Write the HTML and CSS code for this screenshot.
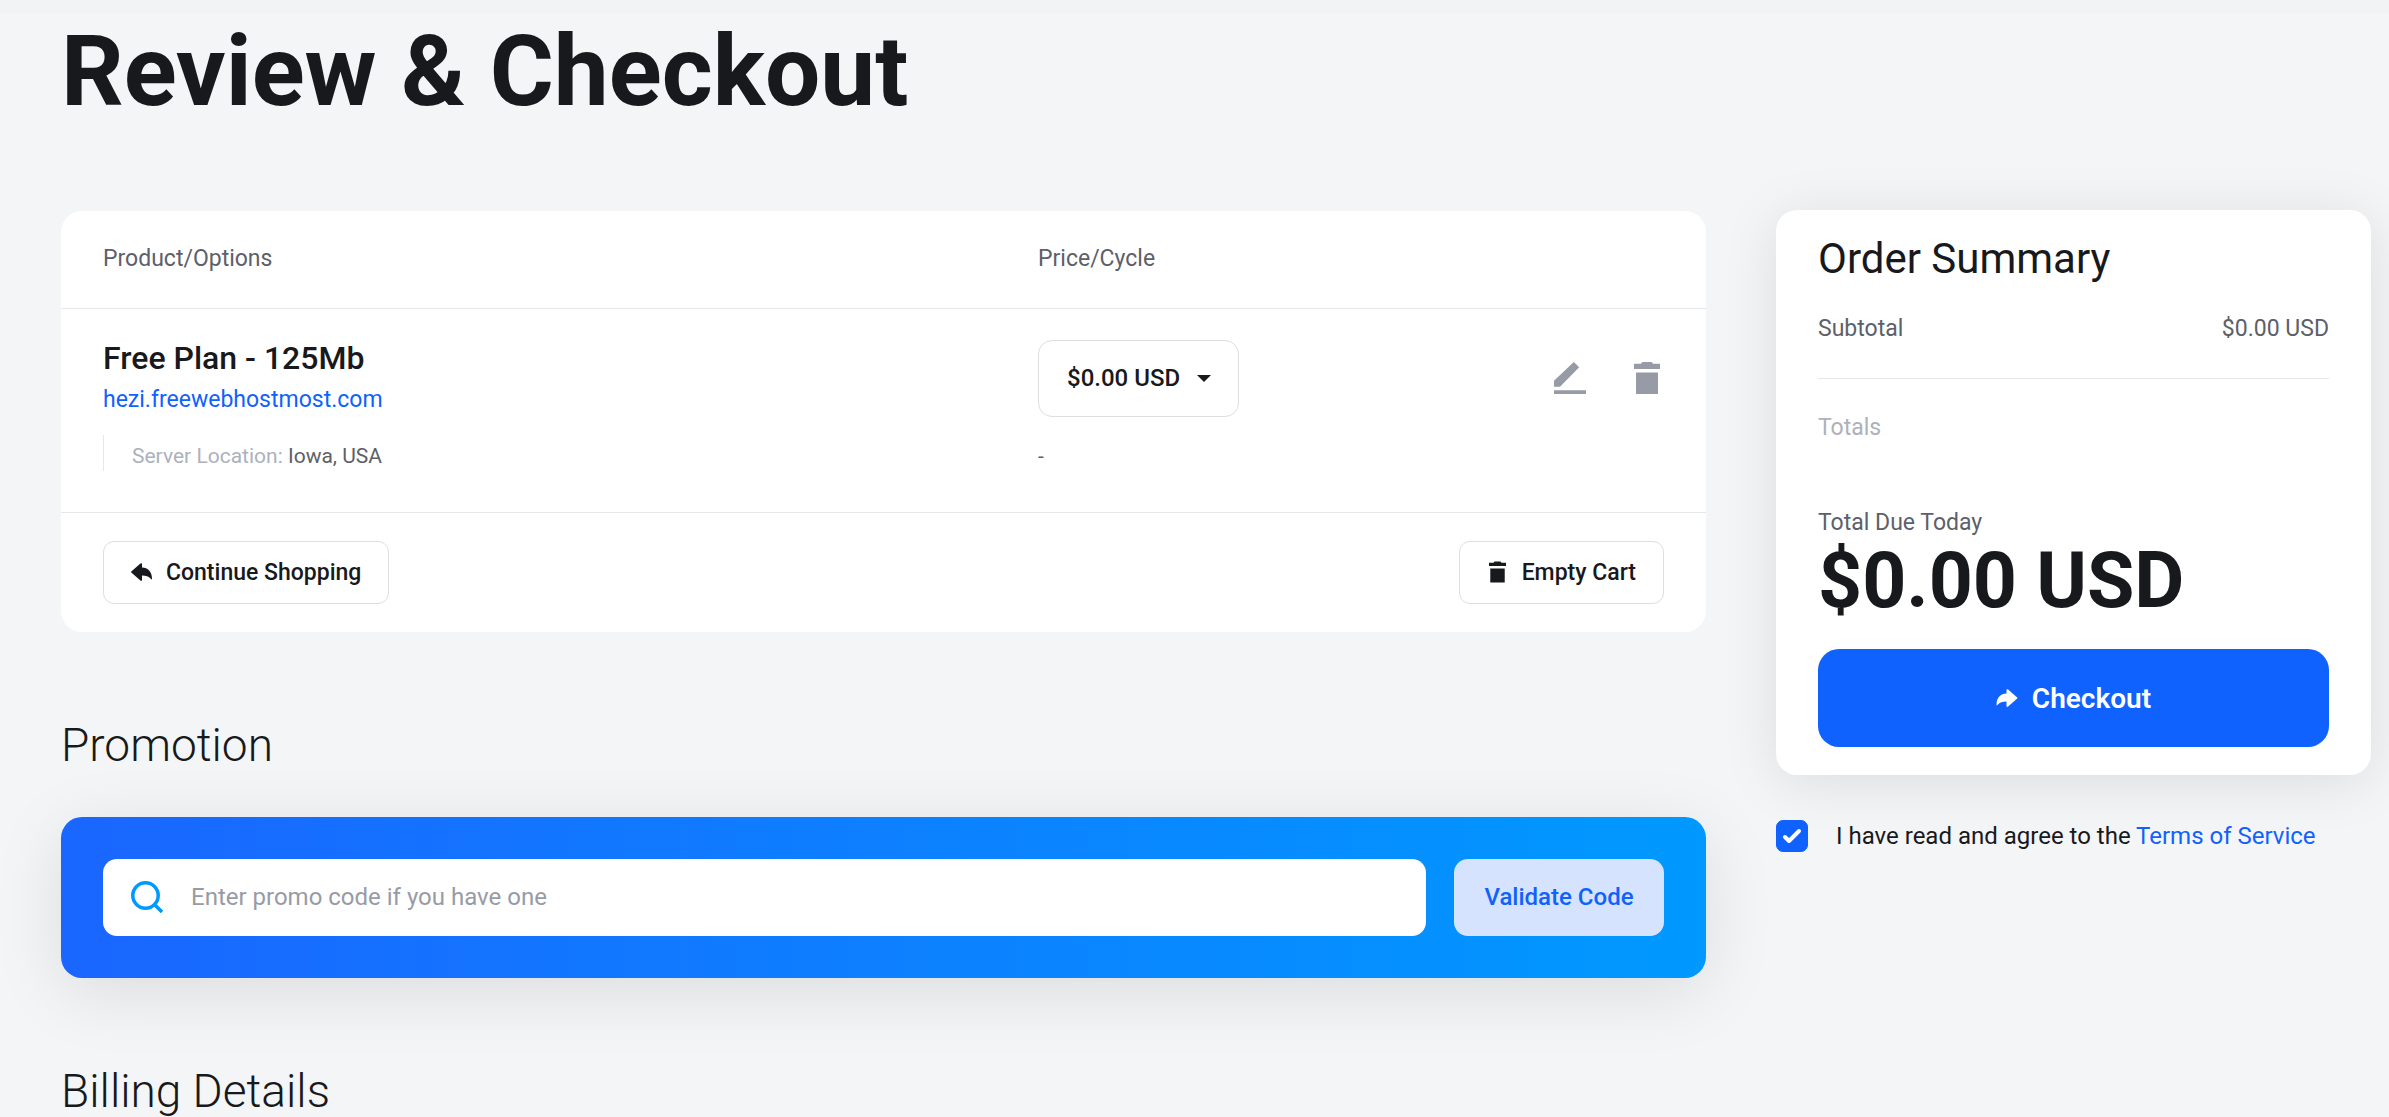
FILE: index.html
```html
<!DOCTYPE html>
<html lang="en">
<head>
    <meta charset="UTF-8">
    <meta name="viewport" content="width=device-width, initial-scale=1.0">
    <title>Review &amp; Checkout</title>
    <link rel="stylesheet" href="styles.css">
</head>
<body>
    <h1>Review &amp; Checkout</h1>
    <div class="layout">
        <main>
            <!-- Cart -->
            <section class="card">
                <table class="cart">
                    <thead>
                        <tr>
                            <th class="col-product">Product/Options</th>
                            <th colspan="2">Price/Cycle</th>
                        </tr>
                    </thead>
                    <tbody>
                        <tr class="item">
                            <td>
                                <div class="item-name">Free Plan - 125Mb</div>
                                <a class="item-domain" href="#">hezi.freewebhostmost.com</a>
                            </td>
                            <td>
                                <div class="select-wrap">
                                    <select class="cycle" aria-label="Price/Cycle">
                                        <option>$0.00 USD</option>
                                    </select>
                                    <svg class="caret" width="14" height="7" viewBox="0 0 14 7"><path d="M0 0h14L7 7z" fill="currentColor"/></svg>
                                </div>
                            </td>
                            <td>
                                <div class="actions">
                                    <button class="icon-btn" aria-label="Edit">
                                        <svg width="32" height="32" viewBox="0 0 32 32" fill="currentColor"><path d="M19.8 0l5.4 5.3L6 24.8H0v-6zM0 28.3h32V32H0z"/></svg>
                                    </button>
                                    <button class="icon-btn" aria-label="Remove">
                                        <svg width="26" height="32" viewBox="0 0 26 32" fill="currentColor"><path d="M8.5 0h9l1.6 1.8H26V7H0V1.8h6.9zM2 10.5h22V32H2z"/></svg>
                                    </button>
                                </div>
                            </td>
                        </tr>
                        <tr class="option">
                            <td><div class="option-line"><span class="muted">Server Location:</span> Iowa, USA</div></td>
                            <td colspan="2"><div class="option-price">-</div></td>
                        </tr>
                    </tbody>
                </table>
                <div class="cart-footer">
                    <button class="btn">
                        <svg width="21" height="18" viewBox="0 0 21 18" fill="currentColor"><path d="M.3 8.4L9.4.5Q11-.5 11 1.3v3.3C17 4.8 20.8 8.5 21 15.5q0 1.6-1.2.3C17.8 13.3 15 12.6 11 12.6v4.2q0 1.8-1.6.7L.3 9.6Q-.2 9 .3 8.4z"/></svg>
                        Continue Shopping
                    </button>
                    <button class="btn">
                        <svg width="21" height="22" viewBox="-3 0 32 32" fill="currentColor"><path d="M8.5 0h9l1.6 1.8H26V7H0V1.8h6.9zM2 10.5h22V32H2z"/></svg>
                        Empty Cart
                    </button>
                </div>
            </section>

            <!-- Promo code -->
            <h2>Promotion</h2>
            <form class="promo">
                <div class="promo-field">
                    <svg class="search" width="32" height="32" viewBox="0 0 32 32" fill="none" stroke="currentColor" stroke-width="3.5"><circle cx="14.5" cy="14.5" r="12.7"/><path d="M23.5 23.5l7.5 7.5"/></svg>
                    <input type="text" placeholder="Enter promo code if you have one" aria-label="Promo code">
                </div>
                <button type="button" class="validate">Validate Code</button>
            </form>

            <h2>Billing Details</h2>
        </main>

        <aside>
            <section class="summary">
                <h3>Order Summary</h3>
                <div class="line"><span>Subtotal</span><span>$0.00 USD</span></div>
                <div class="totals">Totals</div>
                <div class="due">Total Due Today</div>
                <div class="amount">$0.00 USD</div>
                <button class="checkout">
                    <svg width="22" height="18" viewBox="0 0 21 18" fill="currentColor"><path d="M20.7 8.4L11.6.5Q10-.5 10 1.3v3.3C4 4.8.2 8.5 0 15.5q0 1.6 1.2.3C3.2 13.3 6 12.6 10 12.6v4.2q0 1.8 1.6.7l9.1-7.9q.5-.6 0-1.2z"/></svg>
                    Checkout
                </button>
            </section>
            <div class="terms">
                <div class="check">
                    <input type="checkbox" id="tos" checked>
                    <svg width="20" height="16" viewBox="0 0 20 16" fill="none" stroke="currentColor" stroke-width="4" stroke-linecap="round" stroke-linejoin="round"><path d="M3 9l4 4L17 3"/></svg>
                </div>
                <label for="tos">I have read and agree to the <a href="#">Terms of Service</a></label>
            </div>
        </aside>
    </div>
</body>
</html>
```
FILE: styles.css
```css
* {
    box-sizing: border-box;
}

body {
    margin: 0;
    padding: 23px 18px 0 61px;
    font-family: Roboto, sans-serif;
    font-size: 24px;
    line-height: 36px;
    color: #18191c;
    background: linear-gradient(#f2f3f5 13px, #f4f5f7 13px);
    height: 100vh;
    overflow: hidden;
}

button, input, select {
    font-family: inherit;
    font-size: inherit;
    color: inherit;
}

button {
    cursor: pointer;
}

a {
    color: #1062fe;
    text-decoration: none;
}

h1 {
    margin: 0 0 89px;
    font-size: 98px;
    line-height: 98px;
    font-weight: 700;
}

h2 {
    margin: 85px 0 44px;
    font-size: 46px;
    line-height: 56px;
    font-weight: 300;
}

.layout {
    display: grid;
    grid-template-columns: 1fr 595px;
    gap: 70px;
    align-items: start;
}

.card {
    background: #fff;
    border-radius: 21px;
    margin-top: 1px;
}

/* Cart table */
.cart {
    width: 100%;
    border-collapse: collapse;
    table-layout: fixed;
}

.cart th {
    height: 97px;
    padding: 0 42px 0 0;
    border-bottom: 1px solid #e6e7e9;
    text-align: left;
    font-size: 23px;
    font-weight: 400;
    color: #5d6069;
}

.cart td {
    padding: 0;
    vertical-align: top;
}

.cart th:first-child,
.cart td:first-child {
    padding-left: 42px;
}

.cart td:last-child {
    padding-right: 42px;
}

.col-product {
    width: 977px;
}

.cart .item td {
    padding-top: 31px;
}

.item-name {
    margin-bottom: 6px;
    font-size: 32px;
    font-weight: 500;
}

.item-domain {
    display: block;
    font-size: 23px;
}

.select-wrap {
    position: relative;
    display: inline-block;
    vertical-align: top;
}

.cycle {
    appearance: none;
    height: 77px;
    padding: 0 57px 0 28px;
    border: 1px solid #dcdee1;
    border-radius: 14px;
    background: #fff;
    font-weight: 500;
}

.caret {
    position: absolute;
    right: 28px;
    top: 35px;
    pointer-events: none;
}

.actions {
    display: flex;
    justify-content: flex-end;
    gap: 48px;
    padding: 22px 4px 0 0;
}

.icon-btn {
    display: flex;
    padding: 0;
    border: 0;
    background: none;
    color: #979ba5;
}

.cart .option td {
    padding-top: 17px;
    padding-bottom: 41px;
}

.option-line,
.option-price {
    padding-top: 6px;
    font-size: 21px;
    line-height: 30px;
    color: #5d6069;
}

.option-line {
    padding-left: 28px;
    border-left: 1px solid #e6e7e9;
}

.muted {
    color: #adb1bb;
}

.cart-footer {
    display: flex;
    justify-content: space-between;
    padding: 28px 42px;
    border-top: 1px solid #e6e7e9;
}

.btn {
    display: flex;
    align-items: center;
    gap: 14px;
    height: 63px;
    padding: 0 27px;
    border: 1px solid #dcdee1;
    border-radius: 11px;
    background: #fff;
    font-size: 23px;
    font-weight: 500;
}

/* Promo code */
.promo {
    display: flex;
    gap: 28px;
    padding: 42px;
    border-radius: 21px;
    background: linear-gradient(90deg, #1a66ff, #0099ff);
    box-shadow: 0 14px 70px rgba(0, 0, 0, 0.1);
}

.promo-field {
    position: relative;
    flex: 1;
}

.promo-field input {
    display: block;
    width: 100%;
    height: 77px;
    padding: 0 28px 0 88px;
    border: 0;
    border-radius: 14px;
    background: #fff;
}

.promo-field input::placeholder {
    color: #979ba5;
}

.search {
    position: absolute;
    left: 28px;
    top: 22px;
    color: #0099ff;
}

.validate {
    min-width: 210px;
    height: 77px;
    padding: 0 28px;
    border: 0;
    border-radius: 14px;
    background: #d6e3ff;
    color: #1062fe;
    font-weight: 500;
}

/* Order summary */
.summary {
    padding: 24px 42px 28px;
    border-radius: 21px;
    background: #fff;
    box-shadow: 0 7px 56px rgba(0, 0, 0, 0.1);
    font-size: 23px;
    color: #5d6069;
}

.summary h3 {
    margin: 0 0 27px;
    font-size: 42px;
    line-height: 50px;
    font-weight: 400;
    color: #18191c;
}

.line {
    display: flex;
    justify-content: space-between;
    padding-bottom: 31px;
    border-bottom: 1px solid #e6e7e9;
}

.totals {
    margin: 31px 0 59px;
    color: #adb1bb;
}

.amount {
    font-size: 77px;
    line-height: 80px;
    font-weight: 700;
    color: #18191c;
}

.checkout {
    display: flex;
    align-items: center;
    justify-content: center;
    gap: 14px;
    width: 100%;
    height: 98px;
    margin-top: 28px;
    border: 0;
    border-radius: 21px;
    background: #1062fe;
    color: #fff;
    font-size: 28px;
    font-weight: 600;
}

.terms {
    display: flex;
    align-items: center;
    gap: 28px;
    margin-top: 43px;
}

.check {
    position: relative;
    height: 32px;
}

.check input {
    appearance: none;
    display: block;
    width: 32px;
    height: 32px;
    margin: 0;
    border: 1px solid #c7cad1;
    border-radius: 7px;
}

.check input:checked {
    border-color: #1062fe;
    background: #1062fe;
}

.check svg {
    position: absolute;
    left: 6px;
    top: 8px;
    color: #fff;
    pointer-events: none;
}
```
